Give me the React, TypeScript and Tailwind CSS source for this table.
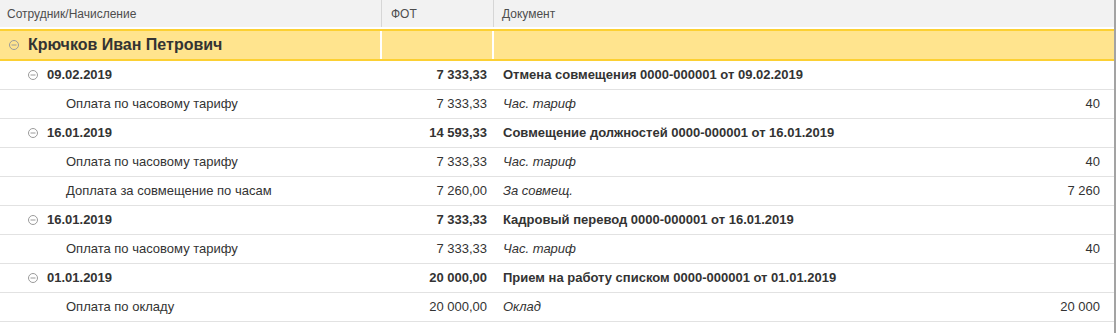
import React from 'react'

type Row = {
  level: 1 | 2
  name: string
  fot: string
  doc: string
  value?: string
}

const rows: Row[] = [
  { level: 1, name: '09.02.2019', fot: '7 333,33', doc: 'Отмена совмещения 0000-000001 от 09.02.2019' },
  { level: 2, name: 'Оплата по часовому тарифу', fot: '7 333,33', doc: 'Час. тариф', value: '40' },
  { level: 1, name: '16.01.2019', fot: '14 593,33', doc: 'Совмещение должностей 0000-000001 от 16.01.2019' },
  { level: 2, name: 'Оплата по часовому тарифу', fot: '7 333,33', doc: 'Час. тариф', value: '40' },
  { level: 2, name: 'Доплата за совмещение по часам', fot: '7 260,00', doc: 'За совмещ.', value: '7 260' },
  { level: 1, name: '16.01.2019', fot: '7 333,33', doc: 'Кадровый перевод 0000-000001 от 16.01.2019' },
  { level: 2, name: 'Оплата по часовому тарифу', fot: '7 333,33', doc: 'Час. тариф', value: '40' },
  { level: 1, name: '01.01.2019', fot: '20 000,00', doc: 'Прием на работу списком 0000-000001 от 01.01.2019' },
  { level: 2, name: 'Оплата по окладу', fot: '20 000,00', doc: 'Оклад', value: '20 000' },
]

function Collapse() {
  return (
    <svg width="10" height="10" viewBox="0 0 10 10" className="shrink-0">
      <circle cx="5" cy="5" r="4.5" fill="none" stroke="#9a9a9a" strokeWidth="1" />
      <line x1="2.5" y1="5" x2="7.5" y2="5" stroke="#9a9a9a" strokeWidth="1" />
    </svg>
  )
}

export default function App() {
  return (
    <div className="w-[1118px] h-[333px] bg-white text-[#333] font-['Liberation_Sans',Arial,sans-serif] overflow-hidden">
      <div className="w-[1116px] h-full border-r-2 border-[#a3a3a3]">
        {/* header */}
        <div className="grid grid-cols-[382px_112px_1fr] h-[27px] bg-[#f2f2f2] text-[12px] text-[#4d4d4d] items-center">
          <div className="h-full flex items-center pl-[7px] border-r border-[#d6d6d6]">Сотрудник/Начисление</div>
          <div className="h-full flex items-center pl-[9px] border-r border-[#d6d6d6]">ФОТ</div>
          <div className="h-full flex items-center pl-[8px]">Документ</div>
        </div>
        <div className="h-[2px] bg-white" />

        {/* selected employee row */}
        <div className="grid grid-cols-[382px_112px_1fr] h-[32px] bg-[#ffe48e] border-y-2 border-[#fcd033]">
          <div className="flex items-center gap-[9px] pl-[9px] border-r-2 border-white">
            <Collapse />
            <span className="text-[16px] font-bold text-[#333]">Крючков Иван Петрович</span>
          </div>
          <div className="border-r-2 border-white" />
          <div />
        </div>

        {rows.map((r, i) => (
          <div
            key={i}
            className="grid grid-cols-[382px_112px_1fr] h-[29px] border-b border-[#e2e2e2] text-[13px] items-center"
          >
            {r.level === 1 ? (
              <div className="flex items-center gap-[9px] pl-[28px] font-bold">
                <Collapse />
                <span>{r.name}</span>
              </div>
            ) : (
              <div className="pl-[66px]">{r.name}</div>
            )}
            <div className={`text-right pr-[7px] ${r.level === 1 ? 'font-bold' : ''}`}>{r.fot}</div>
            {r.level === 1 ? (
              <div className="pl-[9px] font-bold">{r.doc}</div>
            ) : (
              <div className="flex pl-[9px] pr-[14px]">
                <span className="italic">{r.doc}</span>
                <span className="ml-auto">{r.value}</span>
              </div>
            )}
          </div>
        ))}
      </div>
    </div>
  )
}
